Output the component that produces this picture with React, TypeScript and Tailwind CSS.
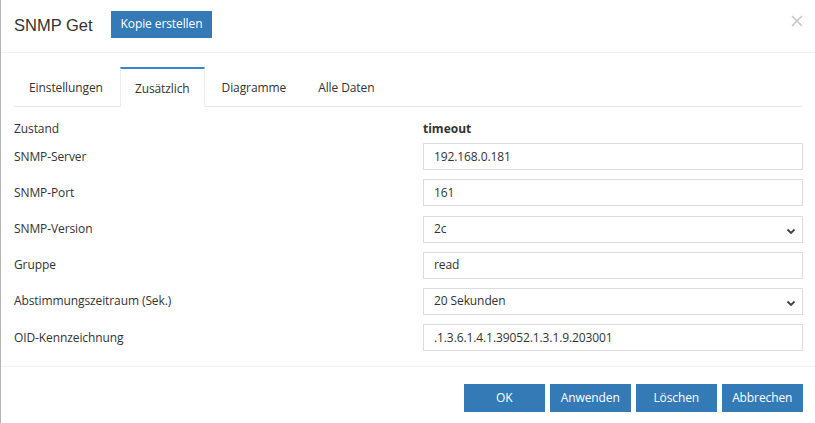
import React from "react";

const font = { fontFamily: '"Open Sans", "Noto Sans", sans-serif' };

function Chevron() {
  return (
    <svg width="10" height="7" viewBox="0 0 10 7" className="absolute right-[6px] top-[11px]">
      <path d="M1.5 1.5 L5 5 L8.5 1.5" fill="none" stroke="#444" strokeWidth="1.8" />
    </svg>
  );
}

function Field({ value, select }: { value: string; select?: boolean }) {
  return (
    <div className="relative h-[27px] w-[380px] border border-[#dcdcdc] bg-white flex items-center pl-[10px] text-[12px] tracking-[-0.1px] text-[#333]">
      {value}
      {select && <Chevron />}
    </div>
  );
}

function Row({ label, value, select }: { label: string; value: string; select?: boolean }) {
  return (
    <div className="flex items-center">
      <div className="w-[409px] text-[12px] tracking-[-0.1px] text-[#333]">{label}</div>
      <Field value={value} select={select} />
    </div>
  );
}

export default function App() {
  const tabs = ["Einstellungen", "Zusätzlich", "Diagramme", "Alle Daten"];
  return (
    <div className="relative w-[815px] h-[423px] bg-white overflow-hidden border-l border-[#b5b5b5]" style={font}>
      <div className="absolute left-[-1px] top-0 w-[1px] h-[14px] bg-[#3a7bbf]" />
      {/* header */}
      <div className="h-[53px] border-b border-[#f0f0f0] flex items-center pl-[13px] pr-[12px]">
        <div className="text-[16.5px] text-[#333] mr-[18px] -mt-[2px]" style={{ fontFamily: '"Liberation Sans", Arial, sans-serif' }}>
          SNMP Get
        </div>
        <button className="h-[27px] px-[10px] bg-[#337ab7] text-white text-[12px] tracking-[-0.1px] -mt-[4px]">Kopie erstellen</button>
        <div className="flex-1" />
        <svg width="12" height="12" viewBox="0 0 12 12" className="-mt-[10px]">
          <path d="M1 1 L11 11 M11 1 L1 11" stroke="#c4c4c4" strokeWidth="1.5" />
        </svg>
      </div>
      {/* tabs */}
      <div className="mx-[13px] mt-[14px] h-[40px] border-b border-[#e8e8e8] flex">
        {tabs.map((t, i) => (
          <div
            key={t}
            className={
              i === 1
                ? "h-[40px] px-[14px] mr-[2px] pt-[1px] flex items-center text-[12px] tracking-[-0.1px] text-[#333] bg-white border-t-[2px] border-t-[#3a87c8] border-x border-x-[#ececec] -mb-[1px]"
                : "h-[39px] px-[15px] mr-[2px] pt-[2px] flex items-center text-[12px] tracking-[-0.1px] text-[#333]"
            }
          >
            {t}
          </div>
        ))}
      </div>
      {/* form */}
      <div className="pl-[13px] pt-[13px] flex flex-col gap-[9.2px]">
        <div className="flex items-center h-[18px] -mb-[4px]">
          <div className="w-[409px] text-[12px] tracking-[-0.1px] text-[#333]">Zustand</div>
          <div className="text-[12px] font-bold text-[#333]">timeout</div>
        </div>
        <Row label="SNMP-Server" value="192.168.0.181" />
        <Row label="SNMP-Port" value="161" />
        <Row label="SNMP-Version" value="2c" select />
        <Row label="Gruppe" value="read" />
        <Row label="Abstimmungszeitraum (Sek.)" value="20 Sekunden" select />
        <Row label="OID-Kennzeichnung" value=".1.3.6.1.4.1.39052.1.3.1.9.203001" />
      </div>
      {/* footer */}
      <div className="absolute left-0 right-0 top-[366px] border-t border-[#f0f0f0]" />
      <div className="absolute right-[12px] top-[384px] flex gap-[4.5px]">
        {["OK", "Anwenden", "Löschen", "Abbrechen"].map((b) => (
          <button key={b} className="w-[81.5px] h-[28px] bg-[#337ab7] text-white text-[12px] tracking-[-0.1px]">
            {b}
          </button>
        ))}
      </div>
    </div>
  );
}
